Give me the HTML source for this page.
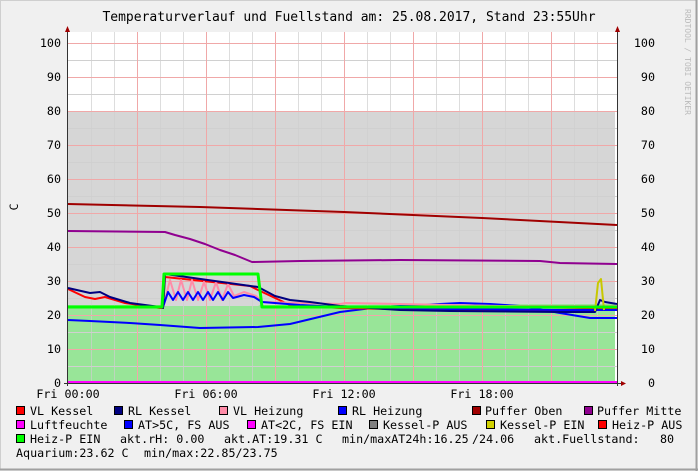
<!DOCTYPE html>
<html><head><meta charset="utf-8"><style>
html,body{margin:0;padding:0;background:#f0f0f0}
svg{display:block}
text{font-family:"DejaVu Sans Mono","Liberation Mono",monospace;fill:#000}
</style></head><body>
<svg width="698" height="471" viewBox="0 0 698 471" xmlns="http://www.w3.org/2000/svg">
<rect x="0" y="0" width="698" height="471" fill="#f0f0f0"/>
<rect x="0.5" y="0.5" width="696" height="469" fill="none" stroke="#cfcfcf" stroke-width="1"/>
<line x1="0" y1="469.5" x2="698" y2="469.5" stroke="#a0a0a0" stroke-width="2"/>
<line x1="696.5" y1="0" x2="696.5" y2="471" stroke="#a0a0a0" stroke-width="2"/>
<text x="349" y="21" font-size="13" text-anchor="middle">Temperaturverlauf und Fuellstand am: 25.08.2017, Stand 23:55Uhr</text>
<!-- plot bg -->
<rect x="68" y="32" width="549" height="351" fill="#ffffff"/>
<!-- areas -->
<rect x="68" y="111" width="547" height="272" fill="#d6d6d6"/>
<polygon points="68,305 160,305 163,306 258,306 260,305 615,304 615,383 68,383" fill="#98e598"/>
<!-- grid -->
<g stroke="#d0d0d0" stroke-width="1">
<path d="M68,60.5H617M68,94.5H617M68,128.5H617M68,162.5H617M68,196.5H617M68,230.5H617M68,264.5H617M68,298.5H617M68,332.5H617M68,366.5H617"/>
<path d="M91.5,32V383M114.5,32V383M160.5,32V383M183.5,32V383M229.5,32V383M252.5,32V383M298.5,32V383M321.5,32V383M367.5,32V383M390.5,32V383M436.5,32V383M459.5,32V383M505.5,32V383M528.5,32V383M574.5,32V383M597.5,32V383" stroke="#cfcfcf" opacity="0.7"/>
</g>
<g stroke="#f0a8a8" stroke-width="1">
<path d="M68,43.5H617M68,77.5H617M68,111.5H617M68,145.5H617M68,179.5H617M68,213.5H617M68,247.5H617M68,281.5H617M68,315.5H617M68,349.5H617"/>
<path d="M137.5,32V383M206.5,32V383M275.5,32V383M344.5,32V383M413.5,32V383M482.5,32V383M551.5,32V383"/>
</g>
<!-- lines -->
<g fill="none" stroke-linejoin="round">
<polyline stroke="#a00000" stroke-width="2" points="68,204 200,207 344,212 482,218 617,225"/>
<polyline stroke="#900090" stroke-width="2" points="68,231 165,232 175,235 190,239 205,244 220,250 235,255 252,262 300,261 400,260 540,261 560,263 617,264"/>
<polyline stroke="#0000ff" stroke-width="2" points="68,320 90,321 130,323 160,325 200,328 258,327 290,324 340,312 380,307 420,305 460,303 490,304 520,306 560,313 590,318 617,318"/>
<polyline stroke="#ff0000" stroke-width="2" points="68,289 85,297 95,299 105,297 125,303 160,308 163,308 165,277 250,286 258,290 290,305 340,308 450,310 550,310 617,309"/>
<polyline stroke="#ff8ca8" stroke-width="2" points="165,300 170,280 176,300 181,280 187,300 192,280 198,300 204,282 210,300 216,282 222,300 228,284 234,296 244,292 256,296 262,302 340,304 346,303 400,304 500,306 617,306"/>
<polyline stroke="#0000ff" stroke-width="2" points="163,307 168,292 173,300 178,292 183,300 188,292 193,300 198,292 203,300 208,292 213,300 218,292 223,300 228,292 233,298 244,295 254,297 262,302 300,305 340,307 450,309 560,310 617,310"/>
<polyline stroke="#000080" stroke-width="2" points="68,288 90,293 100,292 110,297 130,303 160,307 163,308 165,274 258,287 275,296 290,300 310,302 340,306 400,310 450,311 560,312 595,312 600,300 605,302 617,304"/>
<polyline stroke="#c8c800" stroke-width="2" points="595,311 598,283 601,279 604,310"/>
<polyline stroke="#00ff00" stroke-width="3" points="68,307 162,307 164,274 258,274 262,307 617,307"/>
<line x1="68" y1="382" x2="617" y2="382" stroke="#ff00ff" stroke-width="2"/>
</g>
<!-- axes -->
<g stroke="#333" stroke-width="1">
<line x1="67.5" y1="28" x2="67.5" y2="386"/>
<line x1="617.5" y1="28" x2="617.5" y2="386"/>
<line x1="64" y1="383.5" x2="622" y2="383.5"/>
</g>
<polygon points="65,32 70,32 67.5,26" fill="#a00000"/>
<polygon points="615,32 620,32 617.5,26" fill="#a00000"/>
<polygon points="621,381 621,386 626,383.5" fill="#a00000"/>
<g font-size="11.7" text-anchor="end">
<text x="61" y="47">100</text><text x="61" y="81">90</text><text x="61" y="115">80</text><text x="61" y="149">70</text><text x="61" y="183">60</text><text x="61" y="217">50</text><text x="61" y="251">40</text><text x="61" y="285">30</text><text x="61" y="319">20</text><text x="61" y="353">10</text><text x="61" y="387">0</text>
<text x="655" y="47">100</text><text x="655" y="81">90</text><text x="655" y="115">80</text><text x="655" y="149">70</text><text x="655" y="183">60</text><text x="655" y="217">50</text><text x="655" y="251">40</text><text x="655" y="285">30</text><text x="655" y="319">20</text><text x="655" y="353">10</text><text x="655" y="387">0</text>
</g>
<g font-size="11.7" text-anchor="middle">
<text x="68" y="398">Fri 00:00</text><text x="206" y="398">Fri 06:00</text><text x="344" y="398">Fri 12:00</text><text x="482" y="398">Fri 18:00</text>
</g>
<text x="18" y="207" font-size="11.7" text-anchor="middle" transform="rotate(-90 18 207)">C</text>
<text x="685" y="62" font-size="8" fill="#bbbbbb" style="fill:#bbb" text-anchor="middle" transform="rotate(90 685 62)">RRDTOOL / TOBI OETIKER</text>
<!-- legend -->
<g stroke="#000" stroke-width="1">
<rect x="16.5" y="406.5" width="8" height="8" fill="#ff0000"/>
<rect x="114.5" y="406.5" width="8" height="8" fill="#000080"/>
<rect x="219.5" y="406.5" width="8" height="8" fill="#ff8ca8"/>
<rect x="338.5" y="406.5" width="8" height="8" fill="#0000ff"/>
<rect x="472.5" y="406.5" width="8" height="8" fill="#a00000"/>
<rect x="584.5" y="406.5" width="8" height="8" fill="#900090"/>
<rect x="16.5" y="420.5" width="8" height="8" fill="#ff00ff"/>
<rect x="124.5" y="420.5" width="8" height="8" fill="#0000ff"/>
<rect x="247.5" y="420.5" width="8" height="8" fill="#ff00ff"/>
<rect x="369.5" y="420.5" width="8" height="8" fill="#808080"/>
<rect x="486.5" y="420.5" width="8" height="8" fill="#d0d000"/>
<rect x="598.5" y="420.5" width="8" height="8" fill="#ff0000"/>
<rect x="16.5" y="434.5" width="8" height="8" fill="#00ff00"/>
</g>
<g font-size="11.7" xml:space="preserve">
<text x="30" y="415">VL Kessel</text><text x="128" y="415">RL Kessel</text><text x="233" y="415">VL Heizung</text><text x="352" y="415">RL Heizung</text><text x="485" y="415">Puffer Oben</text><text x="597" y="415">Puffer Mitte</text>
<text x="30" y="429">Luftfeuchte</text><text x="138" y="429">AT&gt;5C, FS AUS</text><text x="261" y="429">AT&lt;2C, FS EIN</text><text x="383" y="429">Kessel-P AUS</text><text x="500" y="429">Kessel-P EIN</text><text x="612" y="429">Heiz-P AUS</text>
<text x="30" y="443">Heiz-P EIN</text><text x="120" y="443">akt.rH: 0.00</text><text x="224" y="443">akt.AT:19.31 C</text><text x="342" y="443">min/maxAT24h:16.25</text><text x="472" y="443">/24.06</text><text x="534" y="443">akt.Fuellstand:</text><text x="660" y="443">80</text>
<text x="16" y="457">Aquarium:23.62 C</text><text x="144" y="457">min/max:22.85/23.75</text>
</g>
</svg>
</body></html>
